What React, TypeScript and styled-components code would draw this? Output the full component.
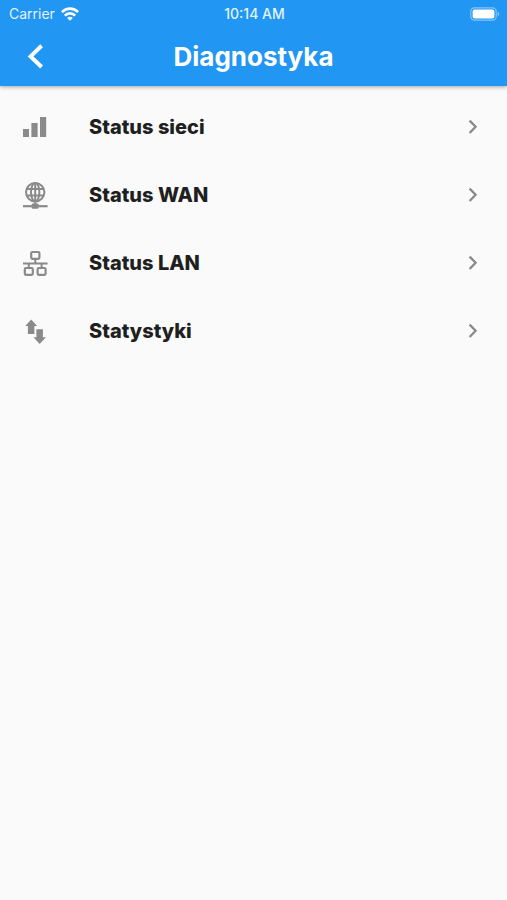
import React from "react";
import styled, { createGlobalStyle } from "styled-components";

const GlobalStyle = createGlobalStyle`
  * {
    box-sizing: border-box;
  }
  body {
    margin: 0;
    background: #fafafa;
    font-family: Inter, "Liberation Sans", sans-serif;
  }
`;

const Screen = styled.div`
  min-height: 100vh;
  background: #fafafa;
`;

const TopBar = styled.header`
  background: #2196f3;
  color: #ffffff;
  box-shadow: 0 1px 4px rgba(0, 0, 0, 0.35);
`;

const StatusBar = styled.div`
  display: grid;
  grid-template-columns: 1fr auto 1fr;
  align-items: center;
  height: 27px;
  padding: 0 7px 0 9px;
  font-size: 14px;
  line-height: 20px;
  color: #e3f3ff;
`;

const Carrier = styled.div`
  display: flex;
  align-items: center;
  gap: 6px;
`;

const Clock = styled.time`
  font-weight: 500;
`;

const Battery = styled.div`
  display: flex;
  justify-content: flex-end;
`;

const NavBar = styled.div`
  display: grid;
  grid-template-columns: 72px 1fr 72px;
  align-items: center;
  height: 59px;
`;

const BackButton = styled.button`
  display: flex;
  align-items: center;
  justify-content: center;
  height: 48px;
  padding: 0;
  border: 0;
  background: none;
  color: inherit;
  cursor: pointer;
`;

const Title = styled.h1`
  margin: 0;
  text-align: center;
  font-size: 26px;
  line-height: 32px;
  font-weight: 700;
`;

const Menu = styled.nav`
  display: flex;
  flex-direction: column;
  padding-top: 7px;
`;

const MenuRow = styled.button`
  display: grid;
  grid-template-columns: 28px 1fr 28px;
  column-gap: 40px;
  align-items: center;
  width: 100%;
  height: 68px;
  padding: 0 20px 0 21px;
  border: 0;
  background: none;
  color: #8a8a8a;
  font-family: inherit;
  text-align: left;
  cursor: pointer;
`;

const RowLabel = styled.span`
  color: #1f1f1f;
  font-size: 20px;
  line-height: 28px;
  font-weight: 800;
`;

const Icon = styled.svg`
  display: block;
`;

const WifiIcon = () => (
  <Icon width="18" height="14" viewBox="0 0 18 14" fill="none" stroke="#fff" strokeWidth="2.6" aria-hidden="true">
    <path d="M0.9 5.1C5.4 0.4 12.6 0.4 17.1 5.1" />
    <path d="M3.8 8.6C6.7 5.6 11.3 5.6 14.2 8.6" />
    <path d="M9 13.8L6.2 11C7.8 9.4 10.2 9.4 11.8 11Z" fill="#fff" stroke="none" />
  </Icon>
);

const BatteryIcon = () => (
  <Icon width="30" height="14" viewBox="0 0 30 14" aria-hidden="true">
    <rect x="0.8" y="0.8" width="25.4" height="12.4" rx="3.6" fill="none" stroke="#86c5f9" strokeWidth="1.2" />
    <rect x="2.6" y="2.4" width="21.8" height="9.2" rx="2" fill="#fff" />
    <path d="M27.6 4.8C29.8 5.4 29.8 8.6 27.6 9.2Z" fill="#86c5f9" />
  </Icon>
);

const BackIcon = () => (
  <Icon width="28" height="28" viewBox="0 0 28 28" fill="none" stroke="currentColor" strokeWidth="4" aria-hidden="true">
    <path d="M19.6 2.8L8.6 13.4L19.6 24" />
  </Icon>
);

const ChevronIcon = () => (
  <Icon width="28" height="28" viewBox="0 0 28 28" fill="none" stroke="currentColor" strokeWidth="2.3" aria-hidden="true">
    <path d="M10.6 7.6L16.6 13.8L10.6 20" />
  </Icon>
);

const SignalIcon = () => (
  <Icon width="28" height="28" viewBox="0 0 28 28" fill="currentColor" aria-hidden="true">
    <path d="M2 16h6v8H2zM10.4 10h6.2v14h-6.2zM19 4h6.2v20H19z" />
  </Icon>
);

const GlobeIcon = () => (
  <Icon width="28" height="28" viewBox="0 0 28 28" fill="none" stroke="currentColor" strokeWidth="2" aria-hidden="true">
    <circle cx="14.2" cy="11.2" r="9.2" />
    <ellipse cx="14.2" cy="11.2" rx="4.2" ry="9.2" />
    <path d="M14.2 2v22M5.6 8h17.2M5.6 14.4h17.2" />
    <path d="M2 25.2h24.6" strokeWidth="2.2" />
    <rect x="10.8" y="22.6" width="6.8" height="5.2" rx="1" fill="currentColor" stroke="none" />
  </Icon>
);

const LanIcon = () => (
  <Icon width="28" height="28" viewBox="0 0 28 28" fill="none" stroke="currentColor" strokeWidth="2.2" aria-hidden="true">
    <rect x="10.2" y="3" width="8.2" height="6.8" rx="1.2" />
    <rect x="3.8" y="19" width="8" height="6.8" rx="1.2" />
    <rect x="16.6" y="19" width="8" height="6.8" rx="1.2" />
    <path d="M2 14.4h24.6M14.3 9.8v4.6M7.8 14.4v4.6M20.6 14.4v4.6" strokeWidth="2" />
  </Icon>
);

const TransferIcon = () => (
  <Icon width="28" height="28" viewBox="0 0 28 28" fill="currentColor" aria-hidden="true">
    <path d="M10.2 2.6L16.2 8.9H13.4V17H6.9V8.9H4.2Z" />
    <path d="M15.4 12.2H21.9V20.2H25L18.7 27L12.4 20.2H15.4Z" />
  </Icon>
);

const items = [
  { label: "Status sieci", Glyph: SignalIcon },
  { label: "Status WAN", Glyph: GlobeIcon },
  { label: "Status LAN", Glyph: LanIcon },
  { label: "Statystyki", Glyph: TransferIcon },
];

export default function App() {
  return (
    <Screen lang="pl">
      <GlobalStyle />
      <TopBar>
        <StatusBar>
          <Carrier>
            Carrier
            <WifiIcon />
          </Carrier>
          <Clock>10:14 AM</Clock>
          <Battery>
            <BatteryIcon />
          </Battery>
        </StatusBar>
        <NavBar>
          <BackButton type="button" aria-label="Wstecz">
            <BackIcon />
          </BackButton>
          <Title>Diagnostyka</Title>
        </NavBar>
      </TopBar>
      <Menu aria-label="Diagnostyka">
        {items.map(({ label, Glyph }) => (
          <MenuRow key={label} type="button">
            <Glyph />
            <RowLabel>{label}</RowLabel>
            <ChevronIcon />
          </MenuRow>
        ))}
      </Menu>
    </Screen>
  );
}
